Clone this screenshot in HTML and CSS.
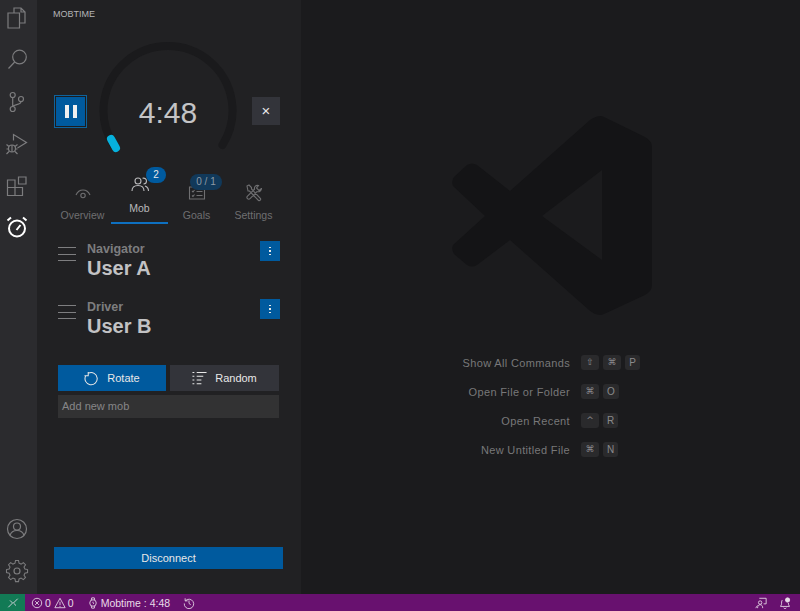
FILE: index.html
```html
<!DOCTYPE html>
<html>
<head>
  <title>Mobtime</title>
  <link rel="stylesheet" href="styles.css">
</head>
<body>
  <div class="app">
    <nav class="activity">
      <div class="activity-group">
        <svg class="act-icon" viewBox="0 0 24 24"><path d="M9 8V3h7l4 4v11h-5M16 3v4h4"/><path d="M3 8h11.500v15h-11.500z"/></svg>
        <svg class="act-icon" viewBox="0 0 24 24"><circle cx="14.500" cy="10" r="6.800"/><path d="M9.700 15 3.500 21.500"/></svg>
        <svg class="act-icon" viewBox="0 0 24 24"><circle cx="7.700" cy="6" r="2.500"/><circle cx="7.700" cy="20" r="2.500"/><circle cx="16" cy="10" r="2.500"/><path d="M7.700 8.500v9M16 12.500c0 3.500-6.500 2.500-8.300 5"/></svg>
        <svg class="act-icon" viewBox="0 0 24 24"><path d="M8.500 9.500V3.500L21.500 11.500 12.500 17"/><circle cx="7" cy="17.500" r="3.500"/><path d="M7 14v7M1.500 13.500l2.500 2M1.500 18h2M1.500 23l2.500-2.500M12.500 13.500l-2.500 2M12.500 18h-2M12.500 23l-2.500-2.500"/></svg>
        <svg class="act-icon" viewBox="0 0 24 24"><path d="M2.500 7h7.500v15.500h-7.500zM2.500 14.500h15v8h-7.500"/><path d="M13.500 4h7.500v7h-7.500z"/></svg>
        <svg class="act-icon active" viewBox="0 0 24 24"><circle cx="12" cy="13.500" r="8"/><path d="M11.500 15 15.500 10M2.500 5.500 6 2.500M21.500 5.500 18 2.500"/></svg>
      </div>
      <div class="activity-group">
        <svg class="act-icon" viewBox="0 0 24 24"><circle cx="12" cy="12" r="9.500"/><circle cx="12" cy="9.500" r="3.500"/><path d="M5 18.500c1-3.500 3.500-5 7-5s6 1.500 7 5"/></svg>
        <svg class="act-icon" viewBox="0 0 24 24"><circle cx="12" cy="12" r="3"/><path d="M10.300 2h3.400l.6 3 2.300 1 2.600-1.700 2.400 2.400-1.700 2.600 1 2.300 3 .6v3.400l-3 .6-1 2.300 1.700 2.600-2.400 2.400-2.600-1.700-2.300 1-.6 3h-3.400l-.6-3-2.300-1-2.600 1.700-2.400-2.400 1.700-2.600-1-2.300-3-.6v-3.400l3-.6 1-2.300-1.700-2.600 2.400-2.400 2.600 1.700 2.300-1z" transform="translate(1.400 -.2) scale(.885)"/></svg>
      </div>
    </nav>

    <aside class="sidebar">
      <h1 class="side-title">MOBTIME</h1>

      <div class="timer-row">
        <button class="pause-btn"><span class="pause-bar"></span><span class="pause-bar"></span></button>
        <div class="dial">
          <svg class="dial-ring" viewBox="0 0 140 140">
            <path class="dial-track" d="M15.500 104A64.500 64.500 0 1 1 124.500 104"/>
            <path class="dial-knob" d="M13 98 18 107"/>
          </svg>
          <span class="dial-time">4:48</span>
        </div>
        <button class="close-btn">&#215;</button>
      </div>

      <div class="tabs">
        <div class="tab">
          <svg class="tab-icon" viewBox="0 0 20 20"><path d="M3 12c1.500-3.500 4-5 7-5s5.500 1.500 7 5"/><circle cx="10" cy="12.500" r="2.200"/></svg>
          <span>Overview</span>
        </div>
        <div class="tab tab-active">
          <span class="badge">2</span>
          <svg class="tab-icon" viewBox="0 0 20 20"><circle cx="8" cy="6" r="3"/><path d="M2 16c0-3.500 2.500-5.500 6-5.500s6 2 6 5.500M12.500 3.200c2.500-.5 4 1 4 2.800s-1.500 3-3 3M15 11c2 .7 3.500 2.500 3.500 5"/></svg>
          <span>Mob</span>
        </div>
        <div class="tab">
          <span class="badge badge-dim">0 / 1</span>
          <svg class="tab-icon" viewBox="0 0 20 20"><path d="M2.500 4h15v12h-15zM5 8l1 1 1.500-2M5 12.500l1 1 1.500-2M9.500 8.500h6M9.500 12.500h6"/></svg>
          <span>Goals</span>
        </div>
        <div class="tab">
          <svg class="tab-icon" viewBox="0 0 20 20"><path d="M3 3l2-1 2.500 2.500v1.500l9 9.500a1.500 1.500 0 0 1-2 2l-9-9.500h-1.500zM17.500 5.500l-2.500 2-2.500-2.500 2-2.500c-2.500-.7-4.500 1-4 3.700l-7 7a1.700 1.700 0 0 0 2.500 2.500l7-7c2.500.5 4.700-1.200 4.500-3.700z"/></svg>
          <span>Settings</span>
        </div>
      </div>

      <div class="users">
        <div class="user">
          <div class="drag"><span></span><span></span><span></span></div>
          <div class="user-info">
            <div class="user-role">Navigator</div>
            <div class="user-name">User A</div>
          </div>
          <button class="more-btn"><span></span><span></span><span></span></button>
        </div>
        <div class="user">
          <div class="drag"><span></span><span></span><span></span></div>
          <div class="user-info">
            <div class="user-role">Driver</div>
            <div class="user-name">User B</div>
          </div>
          <button class="more-btn"><span></span><span></span><span></span></button>
        </div>
      </div>

      <div class="actions">
        <div class="action-row">
          <button class="action action-primary">
            <svg class="action-icon" viewBox="0 0 16 16"><path d="M5 2.200a6.500 6.500 0 1 1-3.200 3M4.500 1v4h-4"/></svg>
            Rotate
          </button>
          <button class="action">
            <svg class="action-icon" viewBox="0 0 16 16"><path d="M5 1.500h10.500M5 5.500h7M5 9.500h5M5 13.500h5M.5 1.500h2M.5 5.500h2M.5 9.500h2M.5 13.500h2"/></svg>
            Random
          </button>
        </div>
        <div class="new-mob">Add new mob</div>
      </div>

      <button class="disconnect">Disconnect</button>
    </aside>

    <main class="editor">
      <svg class="watermark" viewBox="0 0 200 199"><path fill-rule="evenodd" d="M138 4Q147-2 152 1L193 21Q200 25 200 31V169Q200 175 193 179L152 198Q145 201 137 194L58 124 25 149Q20 152 15 149L2 138Q-1 133 1 129L33 100 1 70Q-1 65 2 61L15 49Q20 46 25 49L58 75ZM150 54V144L90 100Z"/></svg>
      <dl class="shortcuts">
        <dt>Show All Commands</dt>
        <dd><kbd>&#8679;</kbd><kbd>&#8984;</kbd><kbd>P</kbd></dd>
        <dt>Open File or Folder</dt>
        <dd><kbd>&#8984;</kbd><kbd>O</kbd></dd>
        <dt>Open Recent</dt>
        <dd><kbd>^</kbd><kbd>R</kbd></dd>
        <dt>New Untitled File</dt>
        <dd><kbd>&#8984;</kbd><kbd>N</kbd></dd>
      </dl>
    </main>

    <footer class="status">
      <div class="remote">
        <svg class="st-icon" viewBox="0 0 14 14"><path d="M1.500 12 6.500 7 3.500 4M12.500 2 7.500 7l3 3"/></svg>
      </div>
      <div class="status-items">
        <span class="st-item">
          <svg class="st-icon" viewBox="0 0 14 14"><circle cx="7" cy="7" r="5.500"/><path d="M4.800 4.800l4.400 4.400M9.200 4.800l-4.400 4.400"/></svg>0
          <svg class="st-icon st-warn" viewBox="0 0 14 14"><path d="M7 1.500 13 12.500H1zM7 5.500v4M7 10.500v1"/></svg>0
        </span>
        <span class="st-item st-mob">
          <svg class="st-icon" viewBox="0 0 14 14"><circle cx="7" cy="7" r="3.800"/><path d="M5 3.500 5.500 1h3L9 3.500M5 10.500 5.500 13h3L9 10.500M7 5.500V7l1 1"/></svg>Mobtime : 4:48
        </span>
        <span class="st-item st-history">
          <svg class="st-icon" viewBox="0 0 14 14"><path d="M2.500 1.500v3h3M2.800 4.500a5.500 5.500 0 1 1-1.300 3M7 4v3.500l2 1.500"/></svg>
        </span>
      </div>
      <div class="status-right">
        <svg class="st-icon" viewBox="0 0 14 14"><path d="M5 1.500h8v6.500h-3M3 13c0-2.500 1-4 3-4s3 1.500 3 4"/><circle cx="6" cy="6.500" r="2"/><path d="M1 13c.5-1.500 1-2.500 2-3"/></svg>
        <svg class="st-icon" viewBox="0 0 14 14"><path d="M4 3.500C2.800 4.500 3 7 3 8.500L1.800 11h10.400L11 8.500V7M5.500 12.500a1.600 1.600 0 0 0 3 0"/><circle class="bell-dot" cx="10" cy="3.500" r="2.500"/></svg>
      </div>
    </footer>
  </div>
</body>
</html>
```

FILE: styles.css
```css
* {
  box-sizing: border-box;
}

body {
  margin: 0;
  background: #1b1b1d;
  font-family: "Liberation Sans", Arial, sans-serif;
  overflow: hidden;
}

button {
  border: none;
  padding: 0;
  font-family: inherit;
  color: #e8e8e8;
}

.app {
  display: grid;
  grid-template-columns: 37px 264px 499px;
  grid-template-rows: 594px 17px;
  width: 800px;
  height: 611px;
}

/* activity bar */
.activity {
  display: flex;
  flex-direction: column;
  justify-content: space-between;
  padding: 5px 3px 11px 0;
  background: #2b2b2e;
}

.activity-group {
  display: flex;
  flex-direction: column;
  align-items: center;
  gap: 18px;
}

.act-icon {
  width: 24px;
  height: 24px;
  fill: none;
  stroke: #7c7c7e;
  stroke-width: 1.2;
}

.act-icon.active {
  stroke: #fff;
  stroke-width: 2;
}

/* sidebar */
.sidebar {
  display: flex;
  flex-direction: column;
  padding: 9px 18px 25px 16px;
  background: #212123;
}

.side-title {
  margin: 0;
  font-size: 9px;
  line-height: 10px;
  font-weight: 400;
  color: #b4b4b6;
}

.timer-row {
  display: flex;
  align-items: center;
  justify-content: space-between;
  margin: 22px 3px 0 1px;
  height: 140px;
}

.pause-btn {
  display: flex;
  align-items: center;
  justify-content: center;
  gap: 4px;
  width: 33px;
  height: 33px;
  background: #005a9e;
  outline: 1px solid #0e639c;
  outline-offset: -1px;
  border: 2px solid #1c1c1e;
}

.pause-bar {
  width: 4px;
  height: 13px;
  background: #f0f0f0;
}

.dial {
  display: flex;
  align-items: center;
  justify-content: center;
  position: relative;
  width: 140px;
  height: 140px;
  margin-left: -3px;
}

.dial-ring {
  position: absolute;
  inset: 0;
  fill: none;
}

.dial-track {
  stroke: #1a1a1c;
  stroke-width: 8;
  stroke-linecap: round;
}

.dial-knob {
  stroke: #06b1dd;
  stroke-width: 8;
  stroke-linecap: round;
}

.dial-time {
  margin-top: 3px;
  font-size: 30px;
  color: #c4c4c6;
}

.close-btn {
  width: 28px;
  height: 28px;
  background: #33343a;
  font-size: 15px;
  line-height: 28px;
}

.tabs {
  display: grid;
  grid-template-columns: repeat(4, 57px);
  margin: -9px 0 0 1px;
}

.tab {
  display: flex;
  flex-direction: column;
  align-items: center;
  position: relative;
  height: 52px;
  padding-top: 11px;
  font-size: 10.500px;
  color: #6f6f71;
}

.tab-active {
  padding-top: 3px;
  color: #b8b8ba;
  border-bottom: 2px solid #0e70c0;
}

.tab-icon {
  width: 20px;
  height: 20px;
  margin-bottom: 6px;
  fill: none;
  stroke: currentColor;
  stroke-width: 1.100;
}

.tab-active .tab-icon {
  margin-bottom: 7px;
}

.badge {
  position: absolute;
  top: -5px;
  left: 35px;
  min-width: 20px;
  height: 16px;
  border-radius: 8px;
  background: #005a9e;
  color: #e8e8e8;
  font-size: 10px;
  line-height: 16px;
  text-align: center;
}

.badge-dim {
  top: 2px;
  left: 22px;
  width: 32px;
  background: #11395a;
  color: #8d9aa5;
}

.users {
  display: flex;
  flex-direction: column;
  gap: 17px;
  margin: 17px 3px 0 5px;
}

.user {
  display: flex;
  align-items: flex-start;
  height: 41px;
}

.drag {
  display: flex;
  flex-direction: column;
  gap: 5.500px;
  width: 18px;
  margin-top: 6px;
}

.drag span {
  height: 1px;
  background: #7e7e80;
}

.user-info {
  flex: 1;
  margin-left: 11px;
}

.user-role {
  margin-top: 1px;
  font-size: 12.500px;
  line-height: 14px;
  font-weight: 700;
  color: #7d7d7f;
}

.user-name {
  font-size: 20px;
  line-height: 25px;
  font-weight: 700;
  color: #c2c2c4;
}

.more-btn {
  display: flex;
  flex-direction: column;
  align-items: center;
  justify-content: center;
  gap: 2px;
  width: 20px;
  height: 20px;
  background: #005a9e;
}

.more-btn span {
  width: 1.500px;
  height: 1.500px;
  background: #e8e8e8;
}

.actions {
  margin: 25px 4px 0 5px;
}

.action-row {
  display: grid;
  grid-template-columns: 108px 109px;
  gap: 4px;
}

.action {
  display: flex;
  align-items: center;
  justify-content: center;
  gap: 8px;
  height: 26px;
  background: #33343a;
  font-size: 11px;
}

.action-primary {
  background: #005a9e;
}

.action-icon {
  width: 15px;
  height: 15px;
  fill: none;
  stroke: #e8e8e8;
  stroke-width: 1.100;
}

.new-mob {
  height: 23px;
  margin-top: 4px;
  padding-left: 4px;
  background: #323233;
  color: #868688;
  font-size: 11px;
  line-height: 23px;
}

.disconnect {
  height: 22px;
  margin-top: auto;
  width: 229px;
  margin-left: 1px;
  background: #005a9e;
  font-size: 11px;
}

/* editor watermark */
.editor {
  padding-top: 116px;
  background: #1b1b1d;
}

.watermark {
  display: block;
  width: 200px;
  height: 199px;
  margin-left: 151px;
  fill: #141416;
}

.shortcuts {
  display: grid;
  grid-template-columns: 129px 1fr;
  column-gap: 11px;
  row-gap: 9px;
  margin: 38px 0 0 140px;
  font-size: 11px;
  line-height: 20px;
  letter-spacing: .35px;
  color: #787879;
}

.shortcuts dt {
  text-align: right;
  white-space: nowrap;
}

.shortcuts dd {
  display: flex;
  gap: 4px;
  margin: 0;
}

kbd {
  min-width: 15px;
  height: 15px;
  margin-top: 2px;
  padding: 0 4px;
  border-radius: 3px;
  background: #2a2a2c;
  color: #8a8a8c;
  font-family: "Liberation Sans", sans-serif;
  font-size: 10px;
  line-height: 15px;
  letter-spacing: 0;
  text-align: center;
}

kbd:nth-child(-n+2):not(:last-child) {
  min-width: 18px;
  font-family: "DejaVu Sans", sans-serif;
  font-size: 9px;
}

/* status bar */
.status {
  grid-column: 1 / -1;
  display: flex;
  align-items: center;
  background: #68116f;
  color: #e8dce8;
  font-size: 10.500px;
}

.remote {
  display: flex;
  align-items: center;
  justify-content: center;
  width: 25px;
  height: 17px;
  background: #127a55;
}

.status-items {
  display: flex;
  align-items: center;
  flex: 1;
  padding-left: 6px;
}

.st-item {
  display: flex;
  align-items: center;
  gap: 2px;
}

.st-warn {
  margin-left: 1px;
}

.st-mob {
  margin-left: 13px;
}

.st-history {
  margin-left: 13px;
}

.st-icon {
  width: 12px;
  height: 12px;
  fill: none;
  stroke: #e8dce8;
  stroke-width: 1;
}

.bell-dot {
  fill: #e8dce8;
}

.status-right {
  display: flex;
  gap: 12px;
  padding-right: 9px;
}
```
